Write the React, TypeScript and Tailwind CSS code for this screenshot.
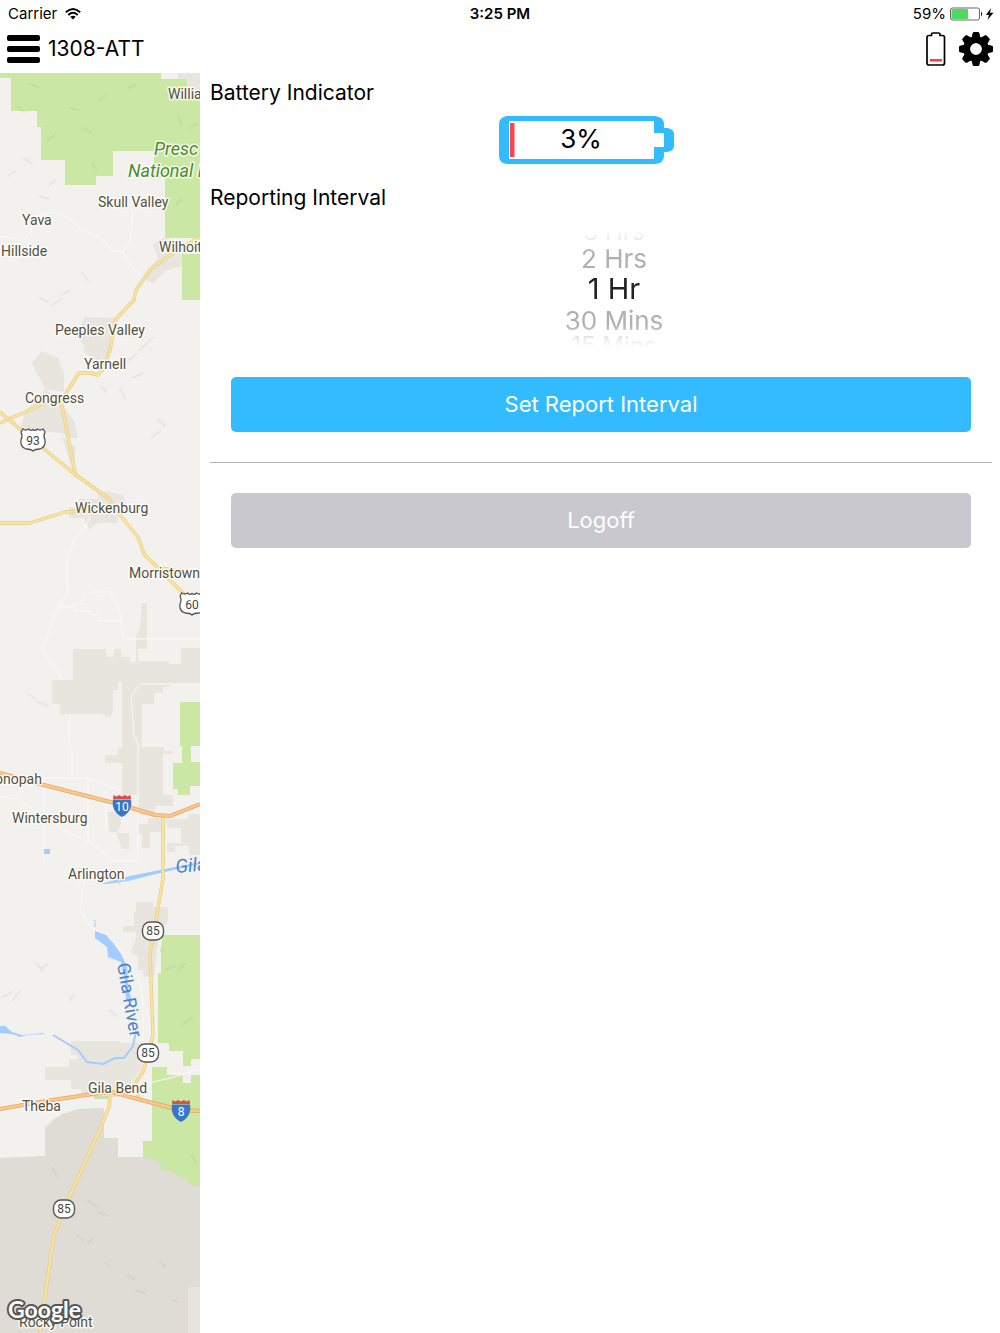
import React, { useState } from 'react';

const intervals = [
  { label: '3 Hrs', style: 'h-6 text-[24px] text-[#c8c8c8]' },
  { label: '2 Hrs', style: 'h-7 text-[26px] text-[#b0b0b0]' },
  { label: '1 Hr', style: 'h-[34px] text-[29px] text-[#222222]' },
  { label: '30 Mins', style: 'h-7 text-[26px] text-[#b0b0b0]' },
  { label: '15 Mins', style: 'h-6 text-[24px] text-[#c8c8c8]' },
];

const places = [
  { name: 'Willia', x: 168, y: 99 },
  { name: 'Skull Valley', x: 98, y: 207 },
  { name: 'Yava', x: 22, y: 225 },
  { name: 'Hillside', x: 1, y: 256 },
  { name: 'Wilhoit', x: 159, y: 252 },
  { name: 'Peeples Valley', x: 55, y: 335 },
  { name: 'Yarnell', x: 84, y: 369 },
  { name: 'Congress', x: 25, y: 403 },
  { name: 'Wickenburg', x: 75, y: 513 },
  { name: 'Morristown', x: 129, y: 578 },
  { name: 'onopah', x: -5, y: 784 },
  { name: 'Wintersburg', x: 12, y: 823 },
  { name: 'Arlington', x: 68, y: 879 },
  { name: 'Gila Bend', x: 88, y: 1093 },
  { name: 'Theba', x: 22, y: 1111 },
  { name: 'Rocky Point', x: 19, y: 1327 },
];

const yellowRoads = [
  'M200 237 L173 253 L151 269 L136 290 L134 300 L116 319 L110 350 L103 369 L98 375 L90 373 L79 373 L61 401',
  'M61 401 L48 402 L0 423',
  'M61 401 L76 477',
  'M0 412 L33 440 L76 475 L108 498 L121 516 L138 537 L144 554 L158 568 L170 580 L190 600',
  'M158 568 L168 569 L185 573',
  'M0 523 L30 523 L65 512 L108 511',
  'M163 816 L163 879 L153 937 L150 953 L153 1034 L149 1052 L143 1072 L134 1085 L119 1092 L110 1096 L109 1107 L100 1129 L64 1209 L54 1235 L43 1310 L40 1333',
  'M134 1085 L139 1098',
];

const orangeRoads = [
  'M0 773 L40 784 L122 805 L155 815 L170 816 L200 804',
  'M0 1109 L40 1102 L92 1094 L112 1092 L145 1101 L180 1110 L200 1111',
];

const whiteRoads = [
  'M30 218 L50 212 L68 217 L80 229 L98 236 L112 250 L122 252 L130 243 L133 210',
  'M0 236 L12 238 L22 241 L31 232 L33 222',
  'M123 252 L128 263 L142 277',
  'M90 517 L84 530 L74 540 L66 563 L68 593 L58 607 L42 650 L63 680',
  'M58 607 L74 607 V604 H83 V596 L90 592 L111 592 V598 L116 600 L121 617 V621 H99 V615 H90 V611 H74 V607',
  'M121 621 L123 639 L200 639',
  'M200 684 L140 684 L131 696 L134 735 L138 744 L138 862',
  'M70 714 L69 745 L72 750 L72 778',
  'M40 778 L88 778 L120 790',
  'M44 778 L44 862 M88 778 L88 842 M106 790 L106 830',
  'M0 796 L20 800 L40 815 L62 829 L95 845 L114 861 L138 861',
  'M84 880 L80 910 L92 928 L105 935 L125 955 L139 978 L143 1000 L143 1045',
  'M140 1085 L170 1078 L200 1069',
];

const urbanAreas = [
  'M153 244 L166 237 L187 250 V264 L165 271 L153 283 L143 278 L158 258 Z',
  'M84 317 L116 318 L109 359 L100 364 L84 352 L84 345 L77 337 Z',
  'M42 351 L58 358 L64 374 L64 392 L45 389 L32 363 L36 358 Z',
  'M45 389 L61 403 L74 421 L78 438 L70 438 L62 433 L20 430 L25 412 Z',
  'M62 436 L76 448 L72 470 Z',
  'M107 491 L123 495 L126 507 L118 510 V523 H98 L89 529 L84 518 H69 V507 H78 V499 H98 V493 Z',
  'M142 603 H147 V649 H138 V661 H169 V664 H181 V648 H200 V684 H170 V687 H163 V693 H154 V704 H142 V747 H164 V751 H173 V754 H163 V795 H173 V806 H155 V815 H137 V795 H122 V763 H105 V755 H118 V748 H122 V682 H118 V690 H113 V710 L110 718 L102 714 H60 V704 H52 V680 H73 V649 H106 V657 H114 V649 H121 V657 H130 V662 H136 V636 L140 628 Z',
  'M108 812 H121 V825 L117 833 H129 V849 H122 L116 832 H109 Z',
  'M138 824 H148 V818 H163 V832 H150 V848 H142 V834 H138 Z M165 819 H188 V814 H200 V855 H189 V846 H175 V852 H167 V843 H181 V828 H168 Z',
  'M136 902 H153 V907 H168 V920 L160 934 L157 949 L154 977 H143 V970 H138 V957 L131 952 L136 939 V932 H123 V926 H134 V912 H136 Z',
  'M71 1041 H120 V1043 H142 V1068 L130 1085 H120 V1097 H81 V1089 H71 V1080 H45 V1067 H69 V1059 H78 V1055 H71 Z',
];

const parks = [
  'M0 73 H161 V79 H187 V97 H200 V238 H165 V178 H154 V151 H113 V176 H96 V185 H65 V160 H41 V127 H37 V111 H11 V78 H0 Z',
  'M182 254 H200 V300 H182 Z',
  'M180 702 H200 V746 H191 V762 H200 V786 H190 V795 H178 V789 H173 V763 H182 V746 H180 Z',
  'M163 935 H200 V1059 H191 V1066 H183 V1051 H169 V1043 H158 V973 H161 V952 H160 Z',
  'M152 1067 H167 V1075 H183 V1083 H191 V1075 H200 V1186 H192 L186 1179 L178 1176 L172 1171 L163 1170 L158 1162 L152 1158 H143 V1141 H152 Z',
];

// Faint hill shading, one short stroke per ridge
const ridges =
  'M18 107 l6 5 M30 84 l8 3 M48 140 l6 -5 M70 108 l8 2 M84 128 l7 4 M105 96 l-6 5 M128 88 l7 -3 M92 163 l5 8 M24 158 l8 6 M8 176 l7 -5 M40 196 l9 3 M55 180 l-5 5 M178 117 l4 8 M190 128 l6 -4 M176 205 l5 -6 M40 298 l8 4 M52 305 l9 -6 M70 290 l-8 5 M82 273 l6 8 M125 363 l12 -9 M139 350 l14 -12 M120 389 l5 9 M132 378 l10 -4 M151 438 l9 -7 M158 420 l7 6 M101 386 l5 6 M28 694 l9 6 M39 702 l9 4 M36 963 l7 8 M41 969 l6 -5 M3 997 l9 -5 M13 1000 l7 -9 M70 1000 l4 -5 M110 1010 l6 6 M166 970 l9 -4 M178 970 l7 -6 M183 1024 l9 -6 M88 1201 l10 6 M98 1212 l10 4 M77 1236 l6 4 M88 1243 l5 -5 M106 1263 l4 3 M128 1275 l6 4 M136 1290 l9 3 M160 1262 l5 5 M172 1300 l5 2 M52 1168 l5 8 M192 1155 l4 8 M113 880 l7 4';

const mapFont = 'Roboto, Inter, sans-serif';

interface ShieldProps {
  x: number;
  y: number;
  label: string;
}

const UsShield = ({ x, y, label }: ShieldProps) => (
  <g transform={`translate(${x} ${y})`}>
    <path
      d="M-10 -11 Q-7 -9 -4.5 -11 Q-2 -8.500 0 -10.500 Q2 -8.500 4.500 -11 Q7 -9 10 -11 L12 -8 Q10 -4 12 0 Q13 7 7 9 Q2 9 0 11 Q-2 9 -7 9 Q-13 7 -12 0 Q-10 -4 -12 -8 Z"
      fill="#fff"
      stroke="#555"
      strokeWidth="1.3"
    />
    <text y="5" textAnchor="middle" fontSize="12" fill="#444" fontFamily={mapFont}>
      {label}
    </text>
  </g>
);

const StateShield = ({ x, y, label }: ShieldProps) => (
  <g transform={`translate(${x} ${y})`}>
    <rect x="-10.500" y="-9" width="21" height="18" rx="7.500" fill="#fff" stroke="#555" strokeWidth="1.4" />
    <text y="4" textAnchor="middle" fontSize="12" fill="#444" fontFamily={mapFont}>
      {label}
    </text>
  </g>
);

const InterstateShield = ({ x, y, label }: ShieldProps) => (
  <g transform={`translate(${x} ${y})`}>
    <path d="M-8.500 -11 L-5.500 -9.500 L-3 -11 L0 -9.500 L3 -11 L5.500 -9.500 L8.500 -11 L9 -7 H-9 Z" fill="#db4f4a" />
    <path d="M-9 -6.500 H9 Q11 5 0 11 Q-11 5 -9 -6.500 Z" fill="#3a76c8" />
    <text y="5" textAnchor="middle" fontSize="12" fill="#fff" fontFamily={mapFont}>
      {label}
    </text>
  </g>
);

const MapView = () => (
  <svg viewBox="0 73 200 1260" className="block h-auto w-full" role="img" aria-label="Map">
    <rect x="0" y="73" width="200" height="1260" fill="#f2f1ee" />
    <path
      d="M0 1158 L45 1156 V1128 L53 1120 L62 1114 L78 1109 L104 1108 V1138 H118 V1157 H200 V1333 H0 Z"
      fill="#dfdbd5"
    />
    <path d="M188 1287 H200 V1333 H188 Z" fill="#e8e4dd" />
    {urbanAreas.map((d) => (
      <path key={d} d={d} fill="#e8e4de" />
    ))}
    {parks.map((d) => (
      <path key={d} d={d} fill="#cae7a3" />
    ))}
    <path d="M178 73 H200 V97 H187 V79 H178 Z" fill="#e8e4de" />
    <path d="M94 1096 h16 v3 h-16 Z" fill="#c6dfb8" />
    <path d={ridges} stroke="#8a8a80" strokeOpacity="0.1" strokeWidth="2" strokeLinecap="round" fill="none" />
    {whiteRoads.map((d) => (
      <path key={d} d={d} stroke="#fbfaf7" strokeWidth="1" fill="none" />
    ))}

    <g fill="#a3ccff">
      <path d="M44 849 h6 v5 h-6 Z" />
      <path d="M101 884 L125 877 L160 870 L200 862 V864 L160 873 L128 881 L106 884 Z" />
      <path d="M95 931 L106 935 L114 944 L121 954 L127 966 L128 985 L132 1003 L126 1000 L124 976 L121 962 L108 957 L107 947 L95 938 Z" />
      <path d="M0 1026 L5 1026 L12 1032 L22 1035 L44 1033 L44 1034 L27 1035 L20 1037 L12 1034 L0 1033 Z" />
    </g>
    <path d="M53 1035 L78 1050 L87 1062 L103 1064 L115 1058 L124 1058 L133 1046 L136 1031" stroke="#a3ccff" strokeWidth="2" fill="none" />
    <path d="M95 920 v7" stroke="#a3ccff" strokeWidth="1" />

    {yellowRoads.map((d) => (
      <g key={d} fill="none" strokeLinejoin="round">
        <path d={d} stroke="#e6cc83" strokeWidth="3.4" />
        <path d={d} stroke="#fbe3a0" strokeWidth="2" />
      </g>
    ))}
    {orangeRoads.map((d) => (
      <g key={d} fill="none" strokeLinejoin="round">
        <path d={d} stroke="#e2a866" strokeWidth="4" />
        <path d={d} stroke="#fdc78c" strokeWidth="2.4" />
      </g>
    ))}

    <UsShield x={33} y={440} label="93" />
    <UsShield x={192} y={604} label="60" />
    <InterstateShield x={122} y={806} label="10" />
    <InterstateShield x={181} y={1111} label="8" />
    <StateShield x={153} y={931} label="85" />
    <StateShield x={148} y={1053} label="85" />
    <StateShield x={64} y={1209} label="85" />

    <g fontFamily={mapFont} stroke="#fff" strokeOpacity="0.8" strokeWidth="3" strokeLinejoin="round" paintOrder="stroke">
      <g fontSize="14" fill="#53503f">
        {places.map((place) => (
          <text key={place.name} x={place.x} y={place.y}>
            {place.name}
          </text>
        ))}
      </g>
      <g fontSize="18" fontStyle="italic" fill="#4b8b2c">
        <text x="154" y="155">Presc</text>
        <text x="128" y="177">National F</text>
      </g>
    </g>
    <g fontFamily={mapFont} fill="#4a82cd">
      <text fontSize="19" fontStyle="italic" transform="translate(176 873) rotate(-5)">
        Gila
      </text>
      <text fontSize="18" transform="translate(117 964) rotate(80)">
        Gila River
      </text>
    </g>
    <text
      x="8"
      y="1318"
      fontSize="23"
      fontWeight="700"
      fontFamily="Lato, sans-serif"
      fill="#fff"
      stroke="#555"
      strokeWidth="4"
      strokeLinejoin="round"
      paintOrder="stroke"
    >
      Google
    </text>
  </svg>
);

const WifiIcon = () => (
  <svg viewBox="0 0 16 12" className="h-3 w-4" fill="none" stroke="#000" strokeWidth="1.9" aria-hidden="true">
    <path d="M0.800 4.300 Q8 -2.300 15.200 4.300" />
    <path d="M3.300 7 Q8 2.700 12.700 7" />
    <path d="M5.300 8.800 Q8 6.500 10.700 8.800 L8 11.500 Z" fill="#000" stroke="none" />
  </svg>
);

const StatusBattery = () => (
  <svg viewBox="0 0 44 14" className="h-[14px] w-[44px]" aria-hidden="true">
    <rect x="0.500" y="1" width="29" height="12" rx="2" fill="#fff" stroke="#666" />
    <rect x="1.500" y="2" width="16.500" height="10" rx="1" fill="#4cd964" />
    <path d="M31 4.500 Q33.500 7 31 9.500 Z" fill="#222" />
    <path d="M41 1 L36 8 H39 L37.500 13 L43.500 5.800 H40 Z" fill="#000" />
  </svg>
);

const DeviceBattery = () => (
  <svg viewBox="0 0 20 34" className="h-[34px] w-5" aria-hidden="true">
    <path
      d="M3 3.500 H5.500 V2.500 Q5.500 1 7 1 H12.500 Q14 1 14 2.500 V3.500 H16.500 Q18.500 3.500 18.500 5.500 V31 Q18.500 33 16.500 33 H3 Q1 33 1 31 V5.500 Q1 3.500 3 3.500 Z"
      fill="#fff"
      stroke="#000"
      strokeWidth="1.700"
    />
    <rect x="4" y="27" width="12" height="2.500" fill="#f9423f" />
  </svg>
);

const GearIcon = () => (
  <svg viewBox="-17 -17 34 34" className="h-[34px] w-[34px]" aria-hidden="true">
    {[0, 45, 90, 135, 180, 225, 270, 315].map((angle) => (
      <path
        key={angle}
        d="M-5 -9 L-3.300 -16 Q-3 -17 -2 -17 H2 Q3 -17 3.300 -16 L5 -9 Z"
        transform={`rotate(${angle})`}
      />
    ))}
    <circle r="9.200" fill="none" stroke="#000" strokeWidth="7" />
    <circle r="5.700" fill="#fff" />
  </svg>
);

const BatteryIndicator = ({ level }: { level: number }) => (
  <svg viewBox="0 0 176 48" className="h-12 w-44" role="img" aria-label={`Battery ${level}%`}>
    <path
      d="M8 0 H156 Q165 1 165 8 V12 H168 Q175 13 175 18 V30 Q175 35 168 36 H165 V40 Q165 47 156 48 H8 Q0 47 0 40 V8 Q0 1 8 0 Z"
      fill="#33bbff"
    />
    <path d="M11 5 H154 Q155 5 155 6 V17 H165 V31 H155 V42 Q155 43 154 43 H11 Q10 43 10 42 V6 Q10 5 11 5 Z" fill="#fff" />
    <rect x="11" y="7" width={level * 1.5} height="34" fill="#fb4550" />
    <text x="82" y="32" textAnchor="middle" fontSize="26" fill="#000" fontFamily="Inter, sans-serif">
      {level}%
    </text>
  </svg>
);

const App: React.FC = () => {
  const [interval, setInterval] = useState('1 Hr');

  return (
    <div className="flex min-h-screen flex-col bg-white font-['Inter','Roboto',sans-serif] text-black">
      <div className="grid h-7 grid-cols-3 items-center px-2 text-[15px]">
        <div className="flex items-center gap-2">
          <span>Carrier</span>
          <WifiIcon />
        </div>
        <span className="text-center font-semibold">3:25 PM</span>
        <div className="-mr-0.5 flex items-center justify-end gap-1">
          <span>59%</span>
          <StatusBattery />
        </div>
      </div>

      <header className="flex h-[45px] items-center justify-between px-[7px] pb-1">
        <div className="flex items-center gap-2">
          <button type="button" aria-label="Menu" className="flex w-[33px] flex-col gap-[5px]">
            <span className="h-[6px] w-full rounded-xs bg-black" />
            <span className="h-[6px] w-full rounded-xs bg-black" />
            <span className="h-[6px] w-full rounded-xs bg-black" />
          </button>
          <h1 className="text-[21px]">1308-ATT</h1>
        </div>
        <div className="flex items-center gap-[13px]">
          <DeviceBattery />
          <button type="button" aria-label="Settings">
            <GearIcon />
          </button>
        </div>
      </header>

      <div className="flex flex-1">
        <aside className="w-1/5 shrink-0">
          <MapView />
        </aside>

        <main className="flex-1 pt-1 pr-2 pl-[10px]">
          <h2 className="text-[21px] leading-8">Battery Indicator</h2>
          <div className="mt-[7px] flex justify-center pr-7">
            <BatteryIndicator level={3} />
          </div>

          <h2 className="mt-[18px] text-[21px] leading-8">Reporting Interval</h2>
          <div
            role="radiogroup"
            aria-label="Reporting Interval"
            className="mt-4 flex h-[118px] flex-col items-center justify-center overflow-hidden mask-y-from-80% pl-[26px]"
          >
            {intervals.map((item) => (
              <label key={item.label} className={`flex shrink-0 cursor-pointer items-center ${item.style}`}>
                <input
                  type="radio"
                  name="interval"
                  value={item.label}
                  checked={interval === item.label}
                  onChange={() => setInterval(item.label)}
                  className="sr-only"
                />
                {item.label}
              </label>
            ))}
          </div>

          <div className="px-[21px] pt-[29px]">
            <button type="button" className="h-[55px] w-full rounded-[5px] bg-[#33bbff] text-[22px] text-white">
              Set Report Interval
            </button>
          </div>
          <hr className="my-[30px] border-[#b3b3b3]" />
          <div className="px-[21px]">
            <button type="button" className="h-[55px] w-full rounded-[5px] bg-[#c9c8ce] text-[22px] text-white">
              Logoff
            </button>
          </div>
        </main>
      </div>
    </div>
  );
};

export default App;
